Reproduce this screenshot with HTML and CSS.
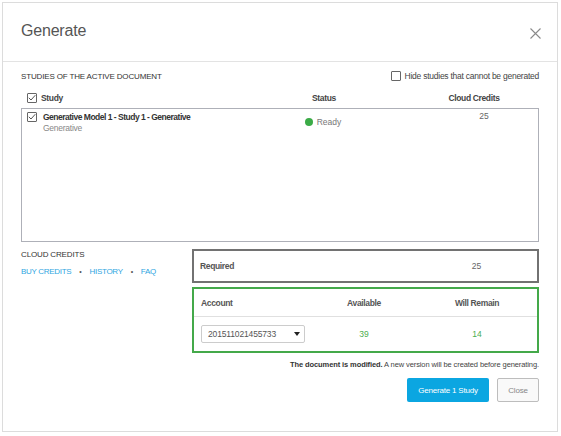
FILE: index.html
```html
<!DOCTYPE html>
<html lang="en">
<head>
    <meta charset="UTF-8">
    <meta name="viewport" content="width=device-width, initial-scale=1.0">
    <title>Generate</title>
    <link rel="stylesheet" href="styles.css">
</head>
<body>
    <div class="dialog">
        <div class="dialog-header">
            <h1 class="dialog-title">Generate</h1>
            <button type="button" class="close-btn" aria-label="Close">
                <svg width="11" height="11" viewBox="0 0 11 11">
                    <path d="M0.5 0.5 L10.5 10.5 M10.5 0.5 L0.5 10.5" stroke="#8a8a8a" stroke-width="1.1" fill="none"/>
                </svg>
            </button>
        </div>

        <div class="dialog-body">
            <div class="section-bar">
                <span class="section-title">STUDIES OF THE ACTIVE DOCUMENT</span>
                <label class="check-label">
                    <span class="checkbox"></span>
                    Hide studies that cannot be generated
                </label>
            </div>

            <div class="study-grid table-head">
                <div class="col-study">
                    <span class="checkbox checked">
                        <svg width="8" height="8" viewBox="0 0 8 8"><path d="M0.8 3.8 L3 6 L7.3 1.2" stroke="#555" stroke-width="1" fill="none"/></svg>
                    </span>
                    Study
                </div>
                <div class="col-status">Status</div>
                <div class="col-credits">Cloud Credits</div>
            </div>

            <div class="study-list">
                <div class="study-grid study-row">
                    <div class="col-study">
                        <span class="checkbox checked">
                            <svg width="8" height="8" viewBox="0 0 8 8"><path d="M0.8 3.8 L3 6 L7.3 1.2" stroke="#555" stroke-width="1" fill="none"/></svg>
                        </span>
                        <div class="study-text">
                            <div class="study-name">Generative Model 1 - Study 1 - Generative</div>
                            <div class="study-type">Generative</div>
                        </div>
                    </div>
                    <div class="col-status"><span class="dot"></span>Ready</div>
                    <div class="col-credits">25</div>
                </div>
            </div>

            <div class="credits-area">
                <div class="credits-info">
                    <div class="section-title">CLOUD CREDITS</div>
                    <div class="credit-links">
                        <a href="#">BUY CREDITS</a>
                        <span class="bullet">&bull;</span>
                        <a href="#">HISTORY</a>
                        <span class="bullet">&bull;</span>
                        <a href="#">FAQ</a>
                    </div>
                </div>
                <div class="credits-boxes">
                    <div class="credit-grid required-box">
                        <div class="label">Required</div>
                        <div></div>
                        <div class="value">25</div>
                    </div>
                    <div class="account-box">
                        <div class="credit-grid account-head">
                            <div class="label">Account</div>
                            <div class="label center">Available</div>
                            <div class="label center">Will Remain</div>
                        </div>
                        <div class="credit-grid account-row">
                            <div>
                                <div class="select">
                                    <span>201511021455733</span>
                                    <span class="caret"></span>
                                </div>
                            </div>
                            <div class="value green">39</div>
                            <div class="value green">14</div>
                        </div>
                    </div>
                </div>
            </div>

            <p class="note"><b>The document is modified.</b> A new version will be created before generating.</p>

            <div class="actions">
                <button type="button" class="btn btn-primary">Generate 1 Study</button>
                <button type="button" class="btn btn-default">Close</button>
            </div>
        </div>
        <span class="grip"></span>
    </div>
</body>
</html>
```

FILE: styles.css
```css
body {
    margin: 0;
    background-color: #ffffff;
    font-family: "Liberation Sans", Arial, sans-serif;
    font-size: 8.5px;
    color: #333;
}

.dialog {
    position: relative;
    box-sizing: border-box;
    width: 556px;
    height: 430px;
    margin: 2px;
    border: 1px solid #dcdcdc;
    background-color: #fff;
}

.dialog-header {
    height: 58px;
    border-bottom: 1px solid #e3e3e3;
    display: flex;
    align-items: center;
    justify-content: space-between;
    padding: 0 16px 0 18px;
}

.dialog-title {
    margin: 0 0 2px;
    font-size: 16px;
    font-weight: normal;
    letter-spacing: -0.2px;
    color: #555;
}

.close-btn {
    border: none;
    background: none;
    padding: 0;
    width: 11px;
    height: 11px;
    margin-top: 3px;
    cursor: pointer;
}

.close-btn svg {
    display: block;
}

.dialog-body {
    padding: 0 18px;
}

.section-bar {
    display: flex;
    justify-content: space-between;
    align-items: center;
    height: 12px;
    margin-top: 8px;
}

.section-title {
    font-size: 8px;
    color: #333;
    letter-spacing: -0.15px;
}

.check-label {
    display: flex;
    align-items: center;
    gap: 4px;
    font-size: 8.5px;
    letter-spacing: -0.25px;
    color: #444;
}

.checkbox {
    box-sizing: border-box;
    width: 10px;
    height: 10px;
    border: 1px solid #666;
    border-radius: 1px;
    background-color: #fff;
    display: inline-flex;
    align-items: center;
    justify-content: center;
    flex-shrink: 0;
}

.study-grid {
    display: grid;
    grid-template-columns: 1fr 110px 130px;
    column-gap: 30px;
}

.table-head {
    height: 12px;
    margin-top: 10px;
    padding-left: 6px;
    align-items: center;
    font-weight: bold;
    color: #444;
    letter-spacing: -0.35px;
}

.table-head .col-study {
    display: flex;
    align-items: center;
    gap: 4px;
}

.col-status,
.col-credits {
    text-align: center;
}

.study-list {
    box-sizing: border-box;
    height: 134px;
    margin-top: 4px;
    border: 1px solid #aeb0b8;
}

.study-row {
    padding: 2px 0 0 5px;
}

.study-row .col-study {
    display: flex;
    align-items: flex-start;
    gap: 6px;
}

.study-row .checkbox {
    margin-top: 1px;
}

.study-name {
    line-height: 12px;
    font-weight: bold;
    color: #333;
    letter-spacing: -0.5px;
}

.study-type {
    line-height: 10px;
    color: #888;
    letter-spacing: -0.25px;
}

.study-row .col-status {
    display: flex;
    align-items: center;
    justify-content: center;
    gap: 4px;
    color: #777;
}

.dot {
    width: 8px;
    height: 8px;
    border-radius: 50%;
    background-color: #3bab47;
}

.study-row .col-credits {
    line-height: 10px;
    padding-left: 22px;
    color: #666;
}

.credits-area {
    display: flex;
    margin-top: 7px;
}

.credits-info {
    width: 171px;
}

.credits-info .section-title {
    line-height: 11px;
}

.credit-links {
    margin-top: 6px;
    line-height: 12px;
    display: flex;
    gap: 8px;
    font-size: 8px;
    letter-spacing: -0.3px;
}

.credit-links a {
    color: #2fa6df;
    text-decoration: none;
}

.bullet {
    color: #555;
    font-size: 7px;
}

.credits-boxes {
    flex: 1;
}

.credit-grid {
    display: grid;
    grid-template-columns: 110px 106px 1fr;
    align-items: center;
    padding-left: 6px;
}

.required-box {
    box-sizing: border-box;
    height: 34px;
    border: 2px solid #727272;
}

.account-box {
    box-sizing: border-box;
    height: 66px;
    margin-top: 4px;
    border: 2px solid #44a94a;
}

.label {
    font-weight: bold;
    color: #555;
    letter-spacing: -0.35px;
}

.center,
.value {
    text-align: center;
}

.value {
    color: #666;
}

.value.green {
    color: #4cae4f;
}

.account-head {
    height: 27px;
    border-bottom: 1px solid #e0e0e0;
    padding-left: 7px;
}

.account-row {
    height: 34px;
    padding-left: 7px;
}

.select {
    box-sizing: border-box;
    width: 104px;
    height: 18px;
    border: 1px solid #ccc;
    border-radius: 2px;
    display: flex;
    align-items: center;
    justify-content: space-between;
    padding: 0 4px 0 6px;
    color: #555;
    letter-spacing: -0.15px;
}

.caret {
    width: 0;
    height: 0;
    border-left: 3px solid transparent;
    border-right: 3px solid transparent;
    border-top: 4px solid #222;
}

.note {
    margin: 6px 0 0;
    line-height: 12px;
    text-align: right;
    font-size: 7.5px;
    color: #444;
    letter-spacing: -0.1px;
}

.note b {
    color: #333;
}

.actions {
    display: flex;
    justify-content: flex-end;
    gap: 8px;
    margin-top: 7px;
}

.btn {
    height: 24px;
    border-radius: 2px;
    font-family: inherit;
    font-size: 8px;
    letter-spacing: -0.2px;
    padding: 0;
    cursor: pointer;
}

.btn-primary {
    width: 82px;
    border: none;
    background-color: #0ba6e1;
    color: #fff;
}

.btn-default {
    width: 42px;
    border: 1px solid #bdbdbd;
    background-color: #f9f9f9;
    color: #888;
}

.grip {
    position: absolute;
    right: 1px;
    bottom: 1px;
    width: 5px;
    height: 5px;
    background-image: radial-gradient(#aaa 40%, transparent 45%);
    background-size: 2px 2px;
}
```
